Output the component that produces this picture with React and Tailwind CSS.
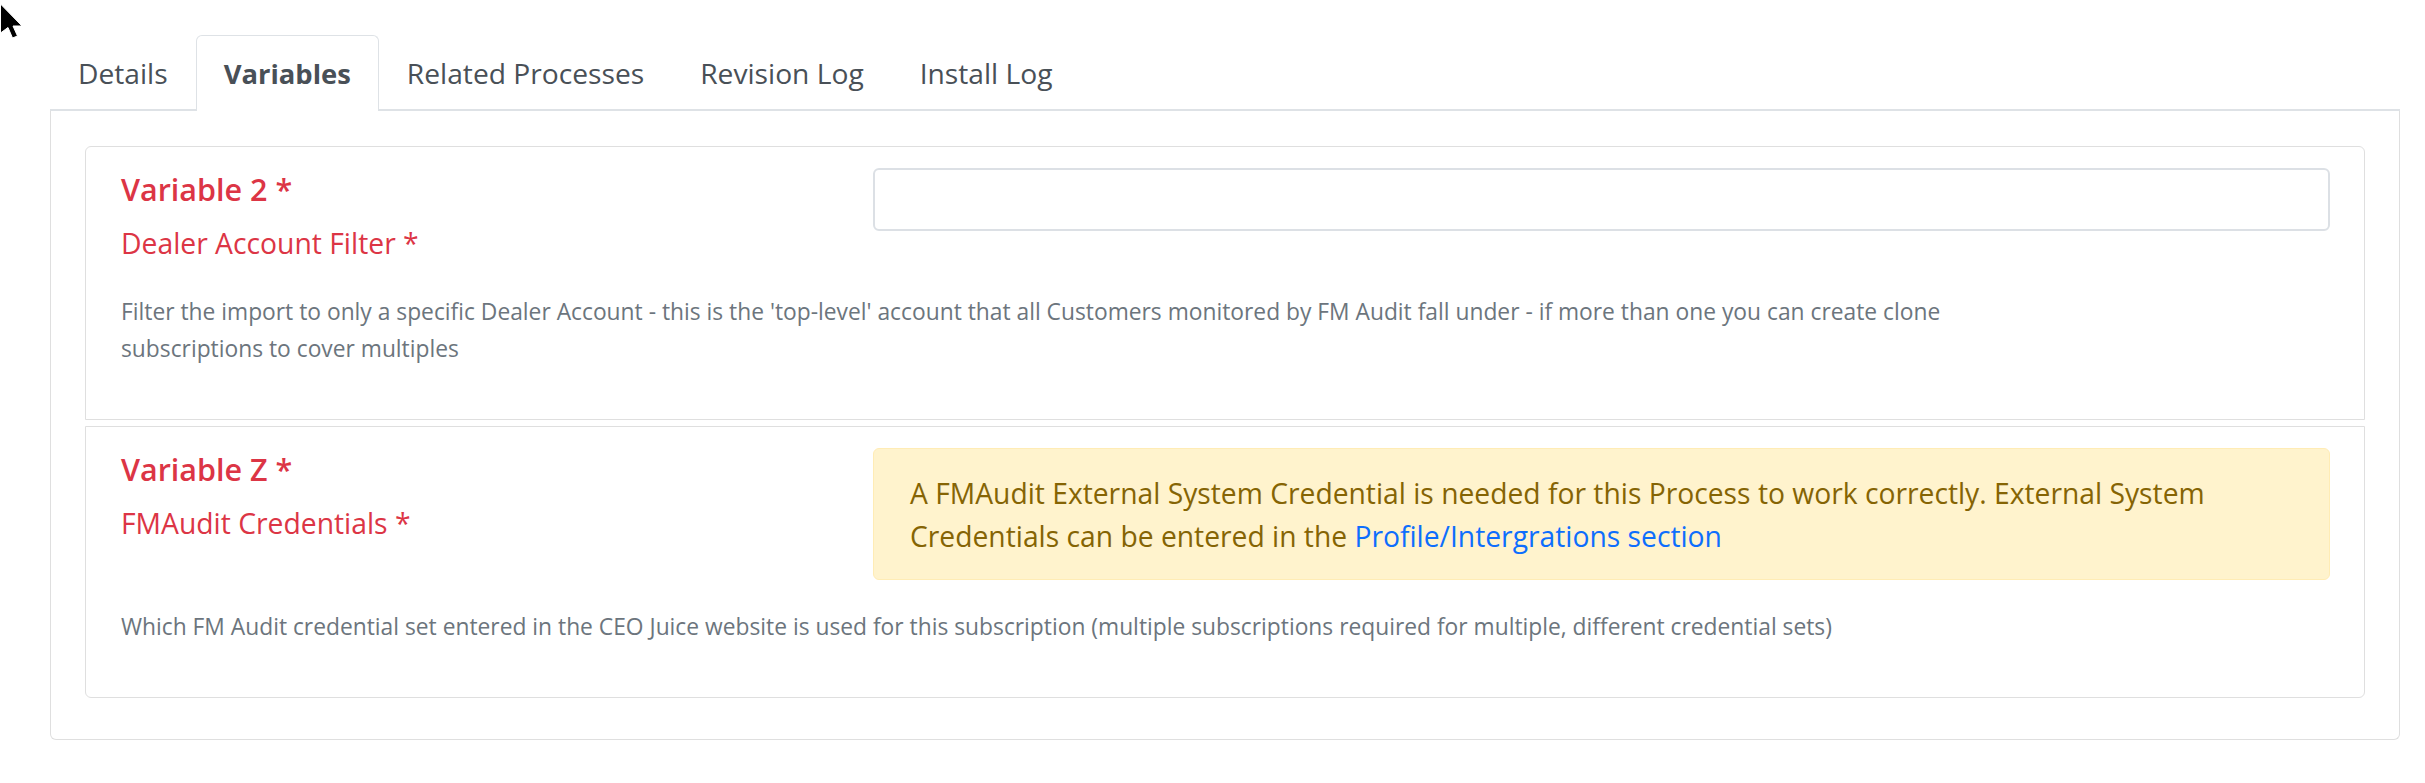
const font = "font-['Open_Sans','Noto_Sans',sans-serif]";

function Cursor() {
  return (
    <svg className="absolute left-0 top-0" width="24" height="38" viewBox="0 0 24 38">
      <path d="M0.5 4 L22 26 L13 26 L17.5 36 L12.5 38 L8 27.5 L0.5 33 Z" fill="#000" stroke="#fff" strokeWidth="1" />
    </svg>
  );
}

function VariableCard({ title, label, hint, children, className }) {
  return (
    <div className={`border border-[#dfdfdf] pl-[35px] pr-[34px] pt-[21px] ${className}`}>
      <div className="flex items-start">
        <div className="w-[752px] shrink-0 pt-[3px] pb-[4px]">
          <h5 className="text-[#dc3545] text-[30.5px] leading-[36px] font-semibold">{title}</h5>
          <p className="text-[#dc3545] text-[28.3px] leading-[36px] mt-[18px]">{label}</p>
        </div>
        <div className="flex-1 min-w-0">{children}</div>
      </div>
      <p className="mt-[28px] max-w-[1880px] text-[22.8px] leading-[37px] text-[#6c757d]">{hint}</p>
    </div>
  );
}

export default function App() {
  const tabs = ["Details", "Variables", "Related Processes", "Revision Log", "Install Log"];

  return (
    <div className={`relative h-[783px] overflow-hidden bg-white pl-[50px] pr-[25px] pt-[35px] ${font}`}>
      <Cursor />
      <div className="flex h-[76px] border-b-2 border-[#dee2e6]">
        {tabs.map((tab) =>
          tab === "Variables" ? (
            <div
              key={tab}
              className="-mb-[2px] flex h-[76px] items-center rounded-t-md border border-b-0 border-[#dee2e6] bg-white px-[27px] pt-[1px] text-[27.4px] font-bold text-[#495057]"
            >
              {tab}
            </div>
          ) : (
            <div key={tab} className="flex items-center px-[28px] pt-[2px] text-[28.2px] text-[#495057]">
              {tab}
            </div>
          )
        )}
      </div>

      <div className="h-[629px] rounded-b-md border border-t-0 border-[#dfdfdf] px-[34px] pt-[35px]">
        <VariableCard
          title="Variable 2 *"
          label="Dealer Account Filter *"
          hint="Filter the import to only a specific Dealer Account - this is the 'top-level' account that all Customers monitored by FM Audit fall under - if more than one you can create clone subscriptions to cover multiples"
          className="h-[274px] rounded-t-md"
        >
          <input className="block h-[63px] w-full rounded-md border-2 border-[#dce0e5] bg-white" />
        </VariableCard>
        <div className="h-[6px]" />
        <VariableCard
          title="Variable Z *"
          label="FMAudit Credentials *"
          hint="Which FM Audit credential set entered in the CEO Juice website is used for this subscription (multiple subscriptions required for multiple, different credential sets)"
          className="h-[272px] rounded-b-md"
        >
          <div className="h-[132px] rounded-md border border-[#ffecb5] bg-[#fff3cd] px-[36px] py-[23px] text-[28.25px] leading-[43px] text-[#856404]">
            A FMAudit External System Credential is needed for this Process to work correctly. External System Credentials can be entered in the{" "}
            <a className="text-[#0d6efd]">Profile/Intergrations section</a>
          </div>
        </VariableCard>
      </div>
    </div>
  );
}
